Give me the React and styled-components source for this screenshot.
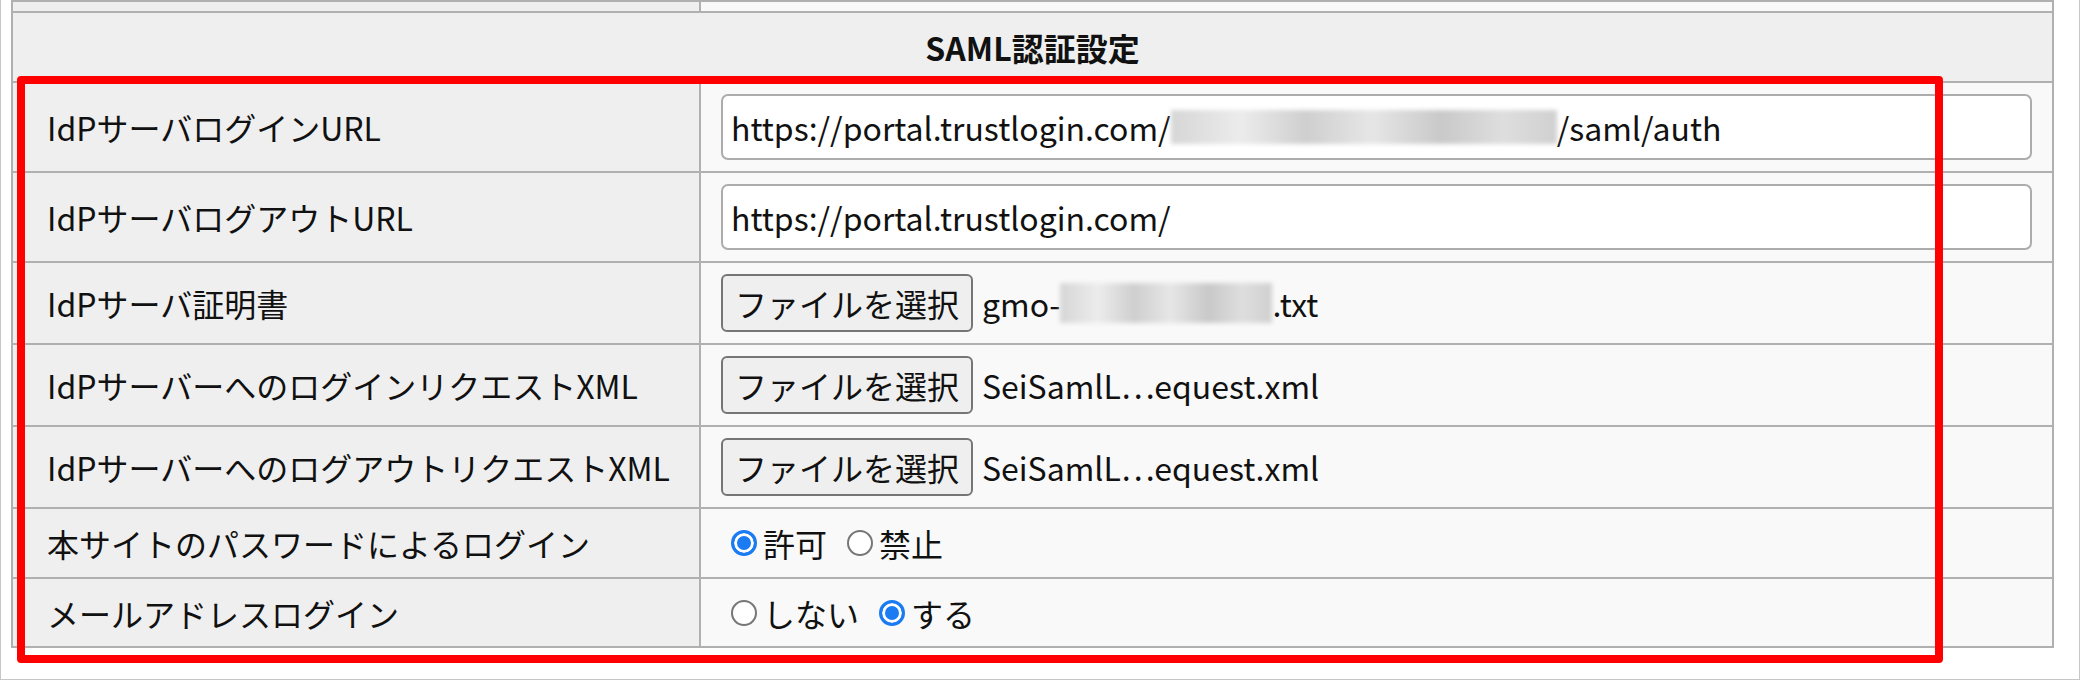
import { Fragment } from 'react'
import styled, { createGlobalStyle } from 'styled-components'

const GlobalStyle = createGlobalStyle`
    html, body {
        margin: 0;
        padding: 0;
        background: #ffffff;
    }
    body {
        font-family: "Noto Sans CJK JP", "Noto Sans", sans-serif;
        color: #111;
    }
`

const Frame = styled.div`
    position: relative;
    width: 2080px;
    height: 680px;
    box-sizing: border-box;
    border: 1px solid #c6c6c6;
    border-top: none;
    padding-left: 10px;
    background: #ffffff;
    overflow: hidden;
`

const Table = styled.div`
    display: grid;
    grid-template-columns: 686px 1fr;
    grid-template-rows: 9px 68px 88px 88px 80px 80px 80px 68px 67px;
    gap: 2px;
    padding: 2px;
    width: 2043px;
    box-sizing: border-box;
    background: #b0b0b0;
`

const HeadCell = styled.div`
    grid-column: 1 / -1;
    display: flex;
    align-items: center;
    justify-content: center;
    background: #efefef;
    font-size: 32px;
    font-weight: 700;
    color: #111;
`

const LabelCell = styled.div`
    display: flex;
    align-items: center;
    padding-left: 34px;
    background: #efefef;
    font-size: 32px;
    white-space: nowrap;
`

const ValueCell = styled.div`
    display: flex;
    align-items: center;
    padding: 0 20px;
    background: #f9f9f9;
    font-size: 32px;
    white-space: nowrap;
`

const TextBox = styled.div`
    flex: 1;
    display: flex;
    align-items: center;
    height: 66px;
    box-sizing: border-box;
    padding: 0 8px;
    border: 2px solid #acacac;
    border-radius: 7px;
    background: #ffffff;
    font-size: 32px;
    color: #111;
`

const Redacted = styled.span`
    display: inline-block;
    width: ${(p) => p.$w}px;
    height: ${(p) => p.$h}px;
    background: linear-gradient(90deg, #d6d6d6 0%, #ececec 18%, #cfcfcf 35%, #e6e6e6 52%, #c9c9c9 70%, #dedede 86%, #d0d0d0 100%);
    filter: blur(2px);
`

const FileButton = styled.button`
    height: 58px;
    box-sizing: border-box;
    padding: 0 12px;
    border: 2px solid #767676;
    border-radius: 6px;
    background: #efefef;
    font-family: inherit;
    font-size: 32px;
    color: #111;
    cursor: pointer;
`

const FileName = styled.span`
    display: flex;
    align-items: center;
    margin-left: 9px;
    font-size: 32px;
`

const Option = styled.label`
    display: flex;
    align-items: center;
    margin-right: 10px;
    font-size: 32px;
`

const RadioMark = styled.span`
    display: inline-block;
    width: 26px;
    height: 26px;
    box-sizing: border-box;
    margin: 0 6px 0 10px;
    border-radius: 50%;
    border: 2px solid #767676;
    background: #ffffff;

    ${(p) =>
        p.$checked &&
        `
        border: 3px solid #1a7bf2;
        background: #1a7bf2;
        box-shadow: inset 0 0 0 3px #ffffff;
    `}
`

const Highlight = styled.div`
    position: absolute;
    left: 16px;
    top: 76px;
    width: 1926px;
    height: 587px;
    box-sizing: border-box;
    border: 8px solid #ff0000;
    border-radius: 4px;
    pointer-events: none;
`

const fileRows = [
    { label: 'IdPサーバ証明書', file: 'cert' },
    { label: 'IdPサーバーへのログインリクエストXML', file: 'SeiSamlL⋯equest.xml' },
    { label: 'IdPサーバーへのログアウトリクエストXML', file: 'SeiSamlL⋯equest.xml' },
]

function Radios({ options }) {
    return options.map((o) => (
        <Option key={o.text}>
            <RadioMark $checked={o.checked} />
            {o.text}
        </Option>
    ))
}

export default function App() {
    return (
        <>
            <GlobalStyle />
            <Frame>
                <Table>
                    <LabelCell />
                    <ValueCell />

                    <HeadCell>SAML認証設定</HeadCell>

                    <LabelCell>IdPサーバログインURL</LabelCell>
                    <ValueCell>
                        <TextBox>
                            https://portal.trustlogin.com/
                            <Redacted $w={386} $h={34} />
                            /saml/auth
                        </TextBox>
                    </ValueCell>

                    <LabelCell>IdPサーバログアウトURL</LabelCell>
                    <ValueCell>
                        <TextBox>https://portal.trustlogin.com/</TextBox>
                    </ValueCell>

                    {fileRows.map((r) => (
                        <Fragment key={r.label}>
                            <LabelCell>{r.label}</LabelCell>
                            <ValueCell>
                                <FileButton>ファイルを選択</FileButton>
                                {r.file === 'cert' ? (
                                    <FileName>
                                        gmo-
                                        <Redacted $w={212} $h={40} />
                                        .txt
                                    </FileName>
                                ) : (
                                    <FileName>{r.file}</FileName>
                                )}
                            </ValueCell>
                        </Fragment>
                    ))}

                    <LabelCell>本サイトのパスワードによるログイン</LabelCell>
                    <ValueCell>
                        <Radios
                            options={[
                                { text: '許可', checked: true },
                                { text: '禁止', checked: false },
                            ]}
                        />
                    </ValueCell>

                    <LabelCell>メールアドレスログイン</LabelCell>
                    <ValueCell>
                        <Radios
                            options={[
                                { text: 'しない', checked: false },
                                { text: 'する', checked: true },
                            ]}
                        />
                    </ValueCell>
                </Table>
                <Highlight />
            </Frame>
        </>
    )
}
